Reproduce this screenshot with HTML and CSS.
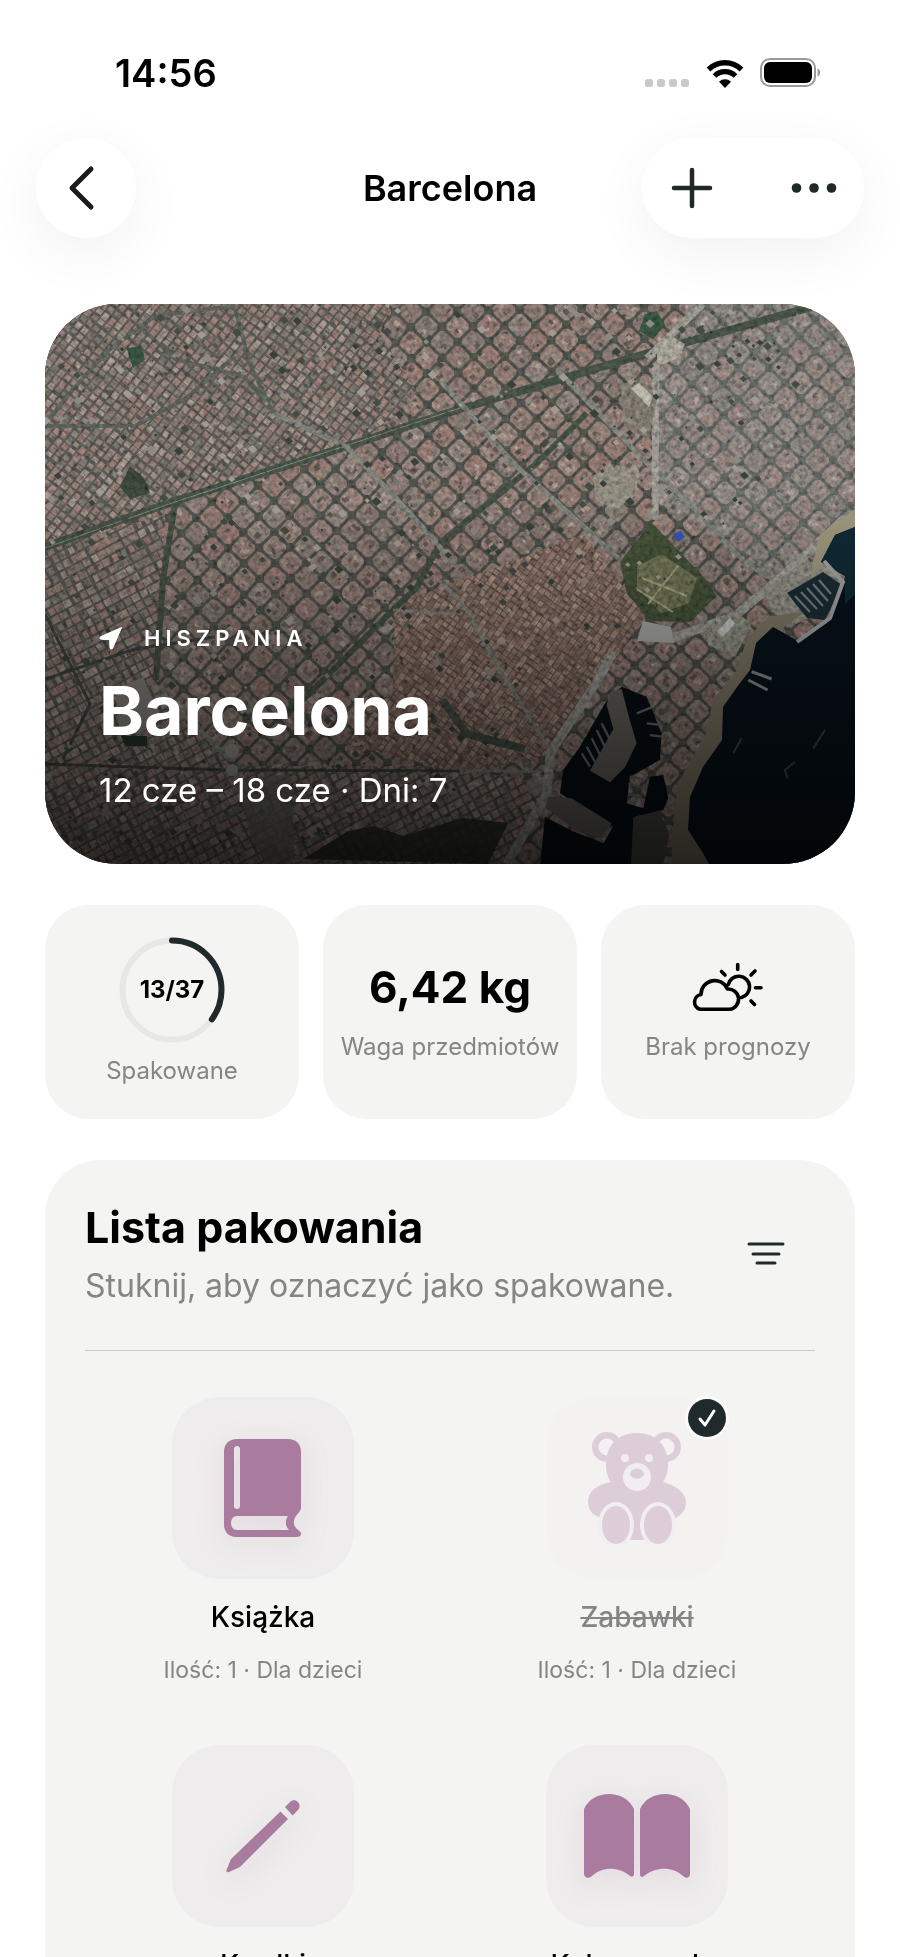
FILE: index.html
```html
<!DOCTYPE html>
<html lang="pl">
<head>
<meta charset="utf-8">
<meta name="viewport" content="width=device-width, initial-scale=1">
<title>Barcelona</title>
<link rel="stylesheet" href="styles.css">
</head>
<body>
<div class="screen">
  <div class="status">
    <span class="status-time">14:56</span>
    <div class="status-icons">
      <svg width="45" height="9" viewBox="0 0 45 9" fill="#c9c9c9" aria-hidden="true"><rect width="8" height="8" rx="2.5"/><rect x="12" width="8" height="8" rx="2.5"/><rect x="24" width="8" height="8" rx="2.5"/><rect x="36" width="8" height="8" rx="2.5"/></svg>
      <svg class="wifi" width="38" height="28" viewBox="0 0 38 28" aria-hidden="true"><path d="M2.5 9.5a23.500 23.500 0 0 1 33 0" fill="none" stroke="#000" stroke-width="5.400"/><path d="M8.500 16a15 15 0 0 1 21 0" fill="none" stroke="#000" stroke-width="5.200"/><path d="M19 28l-6-6.300a8.700 8.700 0 0 1 12 0z"/></svg>
      <svg class="battery" width="61" height="30" viewBox="0 0 61 30" aria-hidden="true"><rect x="1" y="1" width="54" height="27" rx="9" fill="none" stroke="#9a9a9a" stroke-width="2"/><rect x="4" y="4" width="48" height="21" rx="6"/><path d="M57.500 10.500c3.500 1 3.500 7 0 8z" fill="#9a9a9a"/></svg>
    </div>
  </div>

  <header class="navbar">
    <button class="pill back" type="button" aria-label="Wstecz">
      <svg width="30" height="46" viewBox="0 0 30 46" aria-hidden="true"><path d="M24 4L5 23l19 19" fill="none" stroke="#1a1d1e" stroke-width="5" stroke-linecap="round" stroke-linejoin="round"/></svg>
    </button>
    <p class="nav-title">Barcelona</p>
    <div class="pill actions">
      <button class="action" type="button" aria-label="Dodaj"><svg width="42" height="42" viewBox="0 0 42 42" aria-hidden="true"><path d="M21 3v36M3 21h36" stroke="#20282a" stroke-width="4.500" stroke-linecap="round"/></svg></button>
      <button class="action" type="button" aria-label="Więcej"><svg width="46" height="12" viewBox="0 0 46 12" fill="#20282a" aria-hidden="true"><circle cx="5.500" cy="6" r="4.800"/><circle cx="23" cy="6" r="4.800"/><circle cx="40.500" cy="6" r="4.800"/></svg></button>
    </div>
  </header>

  <main class="content">
    <section class="hero">
      <svg class="map" viewBox="0 0 810 560" preserveAspectRatio="xMidYMid slice" aria-hidden="true">
        <defs>
          <clipPath id="clip-north"><path d="M0 0H345L335 30 372 88 345 118 300 140 130 198 0 240z"/></clipPath>
          <clipPath id="clip-south"><path d="M0 246L120 210 112 380 186 462H400L505 480 460 560H0z"/></clipPath>
          <clipPath id="clip-old"><path d="M455 262L538 230 600 312 560 372 505 450 420 470 300 440 348 386 350 300z"/></clipPath>
          <filter id="grain" x="0" y="0" width="100%" height="100%">
            <feTurbulence type="fractalNoise" baseFrequency=".22" numOctaves="3" seed="8"/>
            <feColorMatrix values="1 .3 .3 0 -.35  .9 .4 .3 0 -.35  .9 .3 .4 0 -.35  0 0 0 0 1"/>
          </filter>
        </defs>
        <rect width="810" height="560" fill="#41443e"/>
        <g id="grid"></g>
        <path d="M645 0H810V225L722 275 612 190V60z" fill="#7b8080" opacity=".3"/>
        <g clip-path="url(#clip-north)"><rect width="810" height="560" fill="#4a4a45"/><g id="north"></g></g>
        <g clip-path="url(#clip-south)"><rect width="810" height="560" fill="#484843"/><g id="south"></g></g>
        <g clip-path="url(#clip-old)"><rect width="810" height="560" fill="#564943"/><g id="old"></g></g>
        <g fill="none" stroke-linejoin="round">
          <g stroke="#3a4339" stroke-width="8">
            <path d="M0 243L130 197 300 143 415 105 600 50 770 2"/>
            <path d="M130 200L118 276 111 376" stroke-width="6"/>
            <path d="M542 109L492 159 395 239 372 283 348 306 268 386 240 412" stroke-width="6"/>
            <path d="M397 396L422 430 480 445" stroke-width="8"/>
          </g>
          <g stroke="#696b65" stroke-width="5">
            <path d="M228 109L302 143 362 206 412 263"/><path d="M395 276L422 306 455 366 505 446" stroke-width="4"/>
            <path d="M395 76L468 159 535 219 575 256 600 290"/>
            <path d="M512 66L602 159 648 203 695 253 722 273"/>
            <path d="M108 380L185 456"/><path d="M187 465L262 560"/>
            <path d="M348 306L410 310M502 468L395 466" stroke-width="3"/>
            <path d="M0 120L28 85 65 45 110 12 190 2M190 5L205 60 228 109M92 20L130 55 200 73 228 109M0 122H90L140 95 190 52" stroke="#4b504a" stroke-width="4"/>
            <path d="M0 244L130 198 300 142 415 104" stroke-width="1"/>
          </g>
          <g stroke="#7f7e78" stroke-width="7">
            <path d="M611 59L610 216M658 0L602 54"/><path d="M800 214L740 270 690 312 625 335" stroke-width="9"/>
            <path d="M568 348L555 373 505 449 502 489 462 560" stroke-width="9"/>
          </g>
          <path d="M0 460L180 466 415 467M0 375L90 345 170 333M18 455L45 400 0 310" stroke="#363935" stroke-width="3"/>
        </g>
        <g fill="#69645b">
          <path d="M575 80l22-5 15 20-8 40-25-12z"/><path d="M548 172l18-12 28 6-3 25-20 14-20-8z" fill="#777369"/>
          <path d="M600 10l12-3 8 14-12 14-14-8z" fill="#2e4534"/><path d="M612 40l14-8 14 8-6 14-22 8z" fill="#8b877b"/>
          <path d="M586 84l8-5 14 14-4 10z" fill="#a5a393"/><path d="M85 162l14 12 6 15-20 6-10-12z" fill="#313b30"/><path d="M82 45l14-4 4 15-12 8z" fill="#2b4334"/>
        </g>
        <path d="M606 218L575 258 582 290 607 317 645 318 672 292 656 270z" fill="#39442f"/>
        <path d="M592 262l25-12 35 24-8 25-28 10-24-25z" fill="#5d6046"/><path d="M597 274l45 18M603 300l30-38M590 284l38 24" stroke="#8b896d" stroke-width="2"/>
        <path d="M662 330l25-23 20 12-17 34-27-12z" fill="#77786d"/><path d="M672 328l13-14 5 5-12 14z" fill="#bbbcb9"/>
        <path d="M718 286l36-25 32-8 20 20-30 35-25 12-22-10z" fill="#77776f"/>
        <rect class="grain" width="810" height="560" filter="url(#grain)"/>
        <g id="roofs"></g>
        <path d="M628 230l8-3 4 6-7 5z" fill="#3554b6"/>
        <path d="M598 317l28 6 3 16-37-2z" fill="#aaaaa5"/>
        <path d="M810 205L775 230 768 258 766 275 788 250 810 225z" fill="#9f987f"/>
        <path d="M760 308L725 312 702 334 692 366 668 396 661 430 638 470 630 500 626 560H664L670 545 690 440 715 380 730 330z" fill="#827a68"/>
        <path d="M810 223L790 231 776 258 800 272 798 282 786 316 755 338 728 323 711 339 705 366 692 383 678 403 677 436 658 463 645 493 643 526 658 549 664 560H810z" fill="#08121b"/>
        <path d="M810 223L790 231 776 258 800 272V300L810 290z" fill="#102a35"/>
        <path d="M742 289l36-21 19 13-17 35-18-2z" fill="#1c2d33"/>
        <path d="M750 292l15 16M756 288l16 17M762 284l16 18M768 280l15 17M774 276l12 14" stroke="#78858a" stroke-width="2"/>
        <path d="M779 257L798 278 785 314 752 338" fill="none" stroke="#a4a6a5" stroke-width="4"/>
        <g transform="translate(395 276) scale(.3333)">
          <path d="M420 500l75-130 50-50 75 30 45 110-5 80-90 50-10 80 50 15 20-95 40-5 15 70-15 35-85 20-5 150H300l15-150 75 40 100 40 30-50-160-100 10-70z" fill="#080f15"/>
          <path d="M510 335l35-8 25 95 20 68-35 72-45 45-60-35 70-125-20-72z" fill="#68645f"/>
          <path d="M440 500l30 55M455 475l30 60M470 450l32 65M485 430l28 55M425 520l25 40M620 430l45 5M630 465l35 5M590 400l45-18M565 610l45 15M565 640l40 15M570 590l40 8" stroke="#646a6c" stroke-width="7"/>
          <path d="M935 275l60 22M925 300l58 30" stroke="#8c8e8b" stroke-width="9"/>
          <path d="M905 475l-25 45M1155 450l-35 55M1065 545l-30 25 8 26" stroke="#3e464a" stroke-width="6" fill="none"/>
          <path d="M325 650l70 5 120 75-32 45-70-20-95-70z" fill="#65635e"/>
          <path d="M580 712l78-20 30 70-20 100h-95z" fill="#4b4b48"/>
        </g>
        <g fill="#999791"><circle cx="187" cy="447" r="7"/><circle cx="187" cy="466" r="6"/><circle cx="490" cy="482" r="9" opacity=".5"/></g>
        <path d="M70 385l28-12 18 40-22 18-20-8z" fill="#88847f"/><path d="M76 432h26v10H80z" fill="#25372b"/><path d="M190 475l55-5 5 85-30 5-15-30z" fill="#686762" opacity=".7"/>
        <path d="M258 555l45-28 25-5 30 10 60-18 45 5-20 41z" fill="#262c22" opacity=".85"/>
      </svg>
      <div class="hero-text">
        <p class="country"><svg width="24" height="24" viewBox="0 0 24 24" aria-hidden="true"><path d="M22.500 1.500L13.800 22c-.8 1.600-2.800 1.200-2.900-.6l-.2-7.900-8.200-.2c-1.900 0-2.200-2-.5-2.800z" fill="#fff" stroke="#fff" stroke-linejoin="round"/></svg>HISZPANIA</p>
        <h1 class="city">Barcelona</h1>
        <p class="dates">12 cze – 18 cze · Dni: 7</p>
      </div>
    </section>

    <section class="stats">
      <div class="stat">
        <div class="ring">
          <svg width="106" height="106" viewBox="0 0 106 106" aria-hidden="true"><circle cx="53" cy="53" r="49.500" fill="none" stroke="#e7e7e5" stroke-width="6"/><circle cx="53" cy="53" r="49.500" fill="none" stroke="#20292b" stroke-width="6" stroke-linecap="round" pathLength="37" stroke-dasharray="13 37" transform="rotate(-90 53 53)"/></svg>
          <span class="ring-label">13/37</span>
        </div>
        <p class="stat-label">Spakowane</p>
      </div>
      <div class="stat">
        <p class="stat-value">6,42 kg</p>
        <p class="stat-label">Waga przedmiotów</p>
      </div>
      <div class="stat">
        <svg class="weather" width="72" height="52" viewBox="24 17 72 52" fill="none" stroke="#000" stroke-width="3.600" stroke-linecap="round" stroke-linejoin="round" aria-hidden="true"><path d="M32 65.300H61.500A10.200 10.200 0 0 0 59.500 45 13.800 13.800 0 0 0 33 50.500 7.600 7.600 0 0 0 32 65.300zM60.300 40.500A10.800 10.800 0 1 1 73.500 53.500M69.700 20.500v5M53.500 27.500l3.500 3.500M87 27l-4 4M87.500 43.700h5.500M83 57l3.500 3.500"/></svg>
        <p class="stat-label">Brak prognozy</p>
      </div>
    </section>

    <section class="list">
      <div class="list-head">
        <div>
          <h2 class="list-title">Lista pakowania</h2>
          <p class="list-hint">Stuknij, aby oznaczyć jako spakowane.</p>
        </div>
        <button class="filter" type="button" aria-label="Filtruj"><svg width="38" height="24" viewBox="0 0 38 24" aria-hidden="true"><path d="M2 2h34M6 12h26M10 21h18" stroke="#20282a" stroke-width="3" stroke-linecap="round"/></svg></button>
      </div>
      <div class="items">
        <button class="item" type="button">
          <span class="tile"><svg class="glyph" width="78" height="98" viewBox="0 0 78 98" aria-hidden="true"><path fill="#a97b9f" fill-rule="evenodd" d="M13 0H64c8 0 13 5 13 13V68c0 4-3 6-5 9-3 4-3 10 1 13 2 2 4 2 4 5 0 2-2 3-4 3H12C5 98 0 93 0 86V13C0 5 5 0 13 0zM10 10v57c0 4 6 4 6 0V10c0-4-6-4-6 0zM13 77c-8 0-8 14 0 14H65c-4-4-4-10-1-14z"/></svg></span>
          <span class="name">Książka</span>
          <span class="meta">Ilość: 1 · Dla dzieci</span>
        </button>
        <button class="item done" type="button">
          <span class="tile"><svg class="glyph" width="98" height="112" viewBox="0 0 98 112" aria-hidden="true"><g fill="#dccdd9"><circle cx="19" cy="15" r="15"/><circle cx="78" cy="15" r="15"/><circle cx="19" cy="15" r="8.500" fill="#f5f0f4"/><circle cx="78" cy="15" r="8.500" fill="#f5f0f4"/><path d="M18 33C18 12 31 1 49 1s31 11 31 32c0 7-2 13-5 17 14 4 23 11 23 21 0 7-4 11-9 14L66 108H32L11 85C5 83 0 78 0 70c0-11 10-18 23-20-3-4-5-10-5-17z"/><ellipse cx="28" cy="93" rx="18" ry="23" fill="#f1edf0"/><ellipse cx="70" cy="93" rx="18" ry="23" fill="#f1edf0"/><ellipse cx="28" cy="93" rx="14" ry="19"/><ellipse cx="70" cy="93" rx="14" ry="19"/></g><g fill="#f1edf0"><circle cx="37" cy="26" r="4"/><circle cx="61" cy="26" r="4"/><circle cx="49" cy="45" r="14"/></g><path d="M42 42c1-7 13-7 14 0-1 6-13 6-14 0z" fill="#dccdd9"/></svg><span class="badge"><svg width="38" height="38" viewBox="0 0 38 38" aria-hidden="true"><path d="M12 20l5 6 9-14" fill="none" stroke="#fff" stroke-width="3" stroke-linecap="round" stroke-linejoin="round"/></svg></span></span>
          <span class="name">Zabawki</span>
          <span class="meta">Ilość: 1 · Dla dzieci</span>
        </button>
        <button class="item" type="button">
          <span class="tile"><svg class="glyph" width="74" height="74" viewBox="0 0 74 74" aria-hidden="true"><path d="M54.500 12.500l7.500 7.500L14 68 3 73c-2 .7-3-.5-2.500-2L5 60zM59 8l5-5c5-5 13 2 8 8l-5.500 5.500z" fill="#a97b9f"/></svg></span>
          <span class="name">Kredki</span>
        </button>
        <button class="item" type="button">
          <span class="tile"><svg class="glyph" width="106" height="84" viewBox="0 0 106 84" aria-hidden="true"><path d="M0 15C9-5 41-5 50 15V80c0 3-3 3-4 2-11-9-27-10-38 0-3 3-8 2-8-2zM56 15C65-5 97-5 106 15V80c0 4-4 5-7 2-11-10-27-9-39 0-2 2-4 1-4-2z" fill="#a97b9f"/></svg></span>
          <span class="name">Kolorowanka</span>
        </button>
      </div>
    </section>
  </main>
</div>
<script src="map.js"></script>
</body>
</html>
```
FILE: styles.css
```css
* { box-sizing: border-box; }
body {
  margin: 0;
  background: #fff;
  color: #000;
  font-family: Inter, "Liberation Sans", sans-serif;
}
p, h1, h2 { margin: 0; }
button { border: 0; padding: 0; background: none; color: inherit; font: inherit; }
svg { display: block; }

.screen { height: 100vh; overflow: auto; scrollbar-width: none; }

.status {
  display: flex;
  justify-content: space-between;
  align-items: center;
  padding: 51px 79px 0 115px;
}
.status-time { font-size: 38px; line-height: 44px; font-weight: 600; }
.status-icons { display: flex; align-items: flex-end; gap: 16px; }

.navbar {
  display: grid;
  grid-template-columns: 1fr auto 1fr;
  align-items: center;
  padding: 43px 36px 0;
}
.pill {
  height: 100px;
  border-radius: 50px;
  background: #fff;
  box-shadow: 0 16px 60px rgba(0, 0, 0, .06);
}
.back { width: 100px; display: grid; place-items: center; padding-right: 8px; }
.nav-title { font-size: 36px; line-height: 44px; font-weight: 600; }
.actions { display: flex; justify-content: space-between; justify-self: end; width: 222px; }
.action { display: grid; place-items: center; width: 100px; }

.content { padding: 66px 45px 0; }

.hero {
  position: relative;
  display: flex;
  align-items: flex-end;
  min-height: 560px;
  padding: 54px;
  border-radius: 72px;
  overflow: hidden;
  color: #fff;
}
.map { position: absolute; inset: 0; width: 100%; height: 100%; }
.grain { mix-blend-mode: overlay; opacity: .5; }
.hero::after {
  content: "";
  position: absolute;
  inset: 0;
  background: linear-gradient(rgba(0, 0, 0, 0) 35%, rgba(0, 0, 0, .7));
}
.hero-text { position: relative; z-index: 1; }
.country {
  display: flex;
  align-items: center;
  gap: 21px;
  font-size: 22px;
  line-height: 28px;
  font-weight: 600;
  letter-spacing: 5px;
}
.city { margin-top: 16px; font-size: 68px; line-height: 84px; font-weight: 700; }
.dates { margin-top: 18px; font-size: 33px; line-height: 40px; }

.stats { display: grid; grid-template-columns: repeat(3, 1fr); gap: 24px; margin-top: 41px; }
.stat {
  display: flex;
  flex-direction: column;
  align-items: center;
  justify-content: center;
  gap: 18px;
  min-height: 214px;
  border-radius: 44px;
  background: #f4f5f2;
}
.ring { display: grid; place-items: center; }
.ring > * { grid-area: 1 / 1; }
.ring + .stat-label { margin-top: -6px; }
.ring-label { font-size: 24px; line-height: 28px; font-weight: 700; }
.stat-value { font-size: 44px; line-height: 52px; font-weight: 700; }
.stat-label { color: #858585; font-size: 24px; line-height: 32px; white-space: nowrap; }

.list { margin-top: 41px; padding: 40px; border-radius: 56px; background: #f4f5f2; }
.list-head {
  display: flex;
  align-items: flex-start;
  justify-content: space-between;
  padding: 0 30px 44px 0;
  border-bottom: 1px solid #c8c9c8;
}
.list-title { font-size: 43px; line-height: 54px; font-weight: 700; }
.list-hint { margin-top: 12px; color: #858585; font-size: 32px; line-height: 40px; }
.filter { padding-top: 42px; }
.items { display: grid; grid-template-columns: 1fr 1fr; gap: 61px 18px; padding-top: 46px; }
.item { display: flex; flex-direction: column; align-items: center; justify-content: flex-start; }
.tile {
  position: relative;
  display: grid;
  place-items: center;
  width: 182px;
  height: 182px;
  border-radius: 48px;
  background: #eeecec;
}
.glyph { filter: drop-shadow(0 8px 14px rgba(169, 123, 159, .15)); }
.done .tile { background: #f3f2f1; }
.done .glyph { filter: none; }
.badge {
  position: absolute;
  top: 2px;
  right: 2px;
  border-radius: 50%;
  background: #20292b;
  box-shadow: 0 0 0 3px #fafbf9;
}
.name { margin-top: 20px; font-size: 28px; line-height: 36px; font-weight: 500; }
.done .name { color: #858585; text-decoration: line-through; text-decoration-thickness: 2px; }
.meta { margin-top: 21px; color: #858585; font-size: 23px; line-height: 28px; }
```
FILE: map.js
```js
// Fills the city districts of the map with building blocks.
const NS = "http://www.w3.org/2000/svg";
let seed = 41;
const random = () => (seed = (seed * 16807) % 2147483647) / 2147483647;
const pick = (list) => list[Math.floor(random() * list.length)];

function draw(group, paths) {
  for (const color in paths) {
    const path = document.createElementNS(NS, "path");
    path.setAttribute("d", paths[color]);
    path.setAttribute("fill", color);
    group.append(path);
  }
}

function district(id, size, gap, angle, colors, yard) {
  const group = document.getElementById(id);
  group.setAttribute("transform", `rotate(${angle} 405 280)`);
  const blocks = {};
  const details = {};
  const box = (x, y, w, h, c) =>
    `M${x + c} ${y}h${w - 2 * c}l${c} ${c}v${h - 2 * c}l${-c} ${c}h${2 * c - w}l${-c} ${-c}v${2 * c - h}z`;
  const add = (paths, color, d) => { paths[color] = (paths[color] || "") + d; };
  for (let x = -130; x < 940; x += size) {
    for (let y = -250; y < 810; y += size) {
      const w = size - gap;
      // Fine districts get blocks of uneven length, so that lanes do not form a regular mesh.
      const h = yard ? w : w * (0.7 + random() * 0.6);
      add(blocks, pick(colors), box(x, y, w, h, yard ? 3 : 0));
      if (!yard) continue;
      for (let i = 0; i < 5; i++) {
        const bx = x + 2 + random() * (w - 8);
        const by = y + 2 + random() * (w - 8);
        add(details, pick(["#504a45", "#6b5c57", "#8d7d76", "#626259", "#775f5a"]), box(bx, by, 2 + random() * 4, 2 + random() * 4, 0));
      }
    }
  }
  draw(group, blocks);
  draw(group, details);
}

// Pale flat roofs scattered over the land.
function scatter(id, count) {
  const paths = {};
  for (let i = 0; i < count; i++) {
    const x = random() * 760;
    const y = random() * 540;
    if (x + y > 900 || (x > 480 && y > 340)) continue;
    const s = 1 + random() * 4;
    const color = pick(["#a19b95", "#8d8984", "#37413a", "#434b43"]);
    paths[color] = (paths[color] || "") + `M${x} ${y}l${s} ${s}l${-s} ${s * 0.8}l${-s} ${-s}z`;
  }
  draw(document.getElementById(id), paths);
}

district("grid", 22, 3, 44, ["#77655f", "#70625d", "#7a6963", "#6e645f", "#756a65", "#7a645e"], true);
district("north", 8, 2, 38, ["#796862", "#6f625d", "#82756f", "#66605b", "#7c655f"], false);
district("south", 9, 2, 62, ["#796862", "#6f625d", "#82756f", "#66605b", "#7c655f"], false);
district("old", 6, 1, 35, ["#80685f", "#756057", "#8a7467", "#6b5950"], false);
scatter("roofs", 900);
```
